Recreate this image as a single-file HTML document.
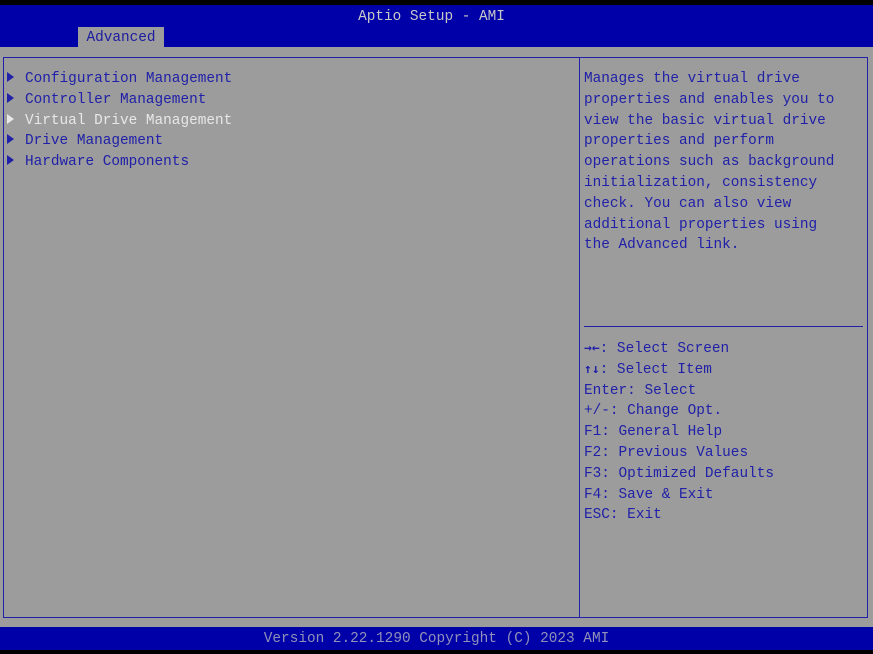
<!DOCTYPE html>
<html><head><meta charset="utf-8"><style>
html,body{margin:0;padding:0}
body{width:873px;height:654px;background:#000;position:relative;overflow:hidden;font-family:"Liberation Mono","DejaVu Sans Mono",monospace;font-size:14.4px}
.top{position:absolute;left:0;top:5px;width:873px;height:42px;background:#0000a8}
.title{position:absolute;top:4px;left:0;width:863px;text-align:center;color:#c8c8c8}
.tab{position:absolute;left:78px;top:22px;width:86px;height:20px;background:#9c9c9c;color:#1c1ca0;text-align:center;line-height:23px}
.main{position:absolute;left:0;top:47px;width:873px;height:580px;background:#9c9c9c}
.box{position:absolute;left:3px;top:10px;width:863px;height:559px;border:1px solid #2020a8}
.div{position:absolute;left:575px;top:0;width:1px;height:559px;background:#2020a8}
.hr{position:absolute;left:580px;top:268px;width:279px;height:1px;background:#2020a8}
.t{position:absolute;color:#2020a8;white-space:pre;line-height:20.8px}
.sel{color:#e8e8e8}
.tri{display:inline-block;width:0;height:0;border-left:7px solid currentColor;border-top:5px solid transparent;border-bottom:5px solid transparent;margin-right:11px;vertical-align:0px}
.foot{position:absolute;left:0;top:627px;width:873px;height:23px;background:#0000a8;color:#9090b8;text-align:center;line-height:24px}
b{font-weight:bold;font-family:"DejaVu Sans Mono",monospace;font-size:13px}
</style></head><body>
<div class="top"><div class="title">Aptio Setup - AMI</div><div class="tab">Advanced</div></div>
<div class="main"><div class="box"><div class="div"></div><div class="hr"></div></div>
<div class="t" style="left:7px;top:22px"><span class="tri"></span>Configuration Management
<span class="tri"></span>Controller Management
<span class="sel"><span class="tri"></span>Virtual Drive Management</span>
<span class="tri"></span>Drive Management
<span class="tri"></span>Hardware Components</div>
<div class="t" style="left:584px;top:22px">Manages the virtual drive
properties and enables you to
view the basic virtual drive
properties and perform
operations such as background
initialization, consistency
check. You can also view
additional properties using
the Advanced link.</div>
<div class="t" style="left:584px;top:292px"><b>→←</b>: Select Screen
<b>↑↓</b>: Select Item
Enter: Select
+/-: Change Opt.
F1: General Help
F2: Previous Values
F3: Optimized Defaults
F4: Save &amp; Exit
ESC: Exit</div>
</div>
<div class="foot">Version 2.22.1290 Copyright (C) 2023 AMI</div>
</body></html>
